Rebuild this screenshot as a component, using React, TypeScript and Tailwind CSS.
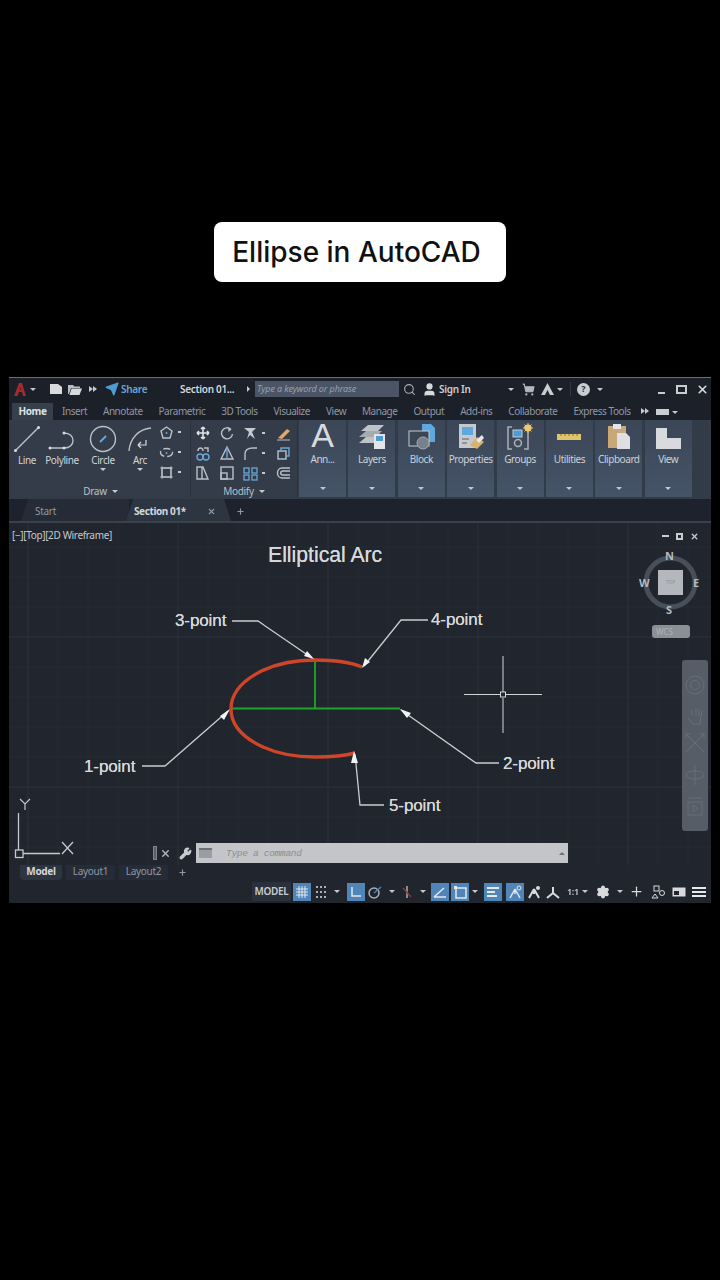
import { Send, Search, User, ShoppingCart, X, Plus, Wrench, Settings } from "lucide-react";

const font = "font-['Noto_Sans','Liberation_Sans',sans-serif]";

const Caret = ({ className = "ml-[3px]" }: { className?: string }) => (
  <span className={`inline-block h-0 w-0 shrink-0 border-x-[3px] border-t-[3px] border-x-transparent border-t-[#c4c9d0] ${className}`} />
);

// two little right pointing triangles, the ribbon's overflow mark
const Chevs = ({ className = "" }: { className?: string }) => (
  <span className={`flex w-[8px] shrink-0 ${className}`}>
    <span className="h-0 w-0 border-y-[3px] border-l-[4px] border-y-transparent border-l-[#c4c9d0]" />
    <span className="h-0 w-0 border-y-[3px] border-l-[4px] border-y-transparent border-l-[#c4c9d0]" />
  </span>
);

const tabs = ["Insert", "Annotate", "Parametric", "3D Tools", "Visualize", "View", "Manage", "Output", "Add-ins", "Collaborate", "Express Tools"];

const S = ({ w, h, children, className = "" }: { w: number; h: number; children: React.ReactNode; className?: string }) => (
  <svg width={w} height={h} viewBox={`0 0 ${w} ${h}`} fill="none" className={`shrink-0 ${className}`}>
    {children}
  </svg>
);

const TitleBar = () => (
  <div className="flex h-[22px] items-center border-t border-[#2f7fb8] bg-[#1c2029] pt-[1px] text-[10px] text-[#c9ced5]">
    <S w={12} h={14} className="ml-[5px]">
      <path d="M0 14 L5 1 H8 L12 14 H9 L8 10 H5 V7.500 H7 L6.500 5 L3.500 14 Z" fill="#a62a2d" />
    </S>
    <Caret className="ml-[4px]" />
    <S w={14} h={12} className="ml-[13px]">
      <path d="M1 1 H9 L13 4 V11 H1 Z" fill="#d8dadd" />
    </S>
    <S w={14} h={12} className="ml-[5px]">
      <path d="M0 2 H5 L6.500 3.500 H12 V5 H3 L1 11 H0 Z" fill="#b9bdc3" />
      <path d="M3.500 5.500 H14 L11.500 12 H1.500 Z" fill="#d8dadd" />
    </S>
    <Chevs className="ml-[7px]" />
    <Send size={14} className="ml-[8px] shrink-0" fill="#4f9bd4" stroke="#4f9bd4" />
    <span className="ml-[2px] w-[26px] shrink-0 font-semibold tracking-[-0.3px] text-[#6ba7d6]">Share</span>
    <span className="ml-[33px] w-[56px] shrink-0 whitespace-nowrap font-semibold tracking-[-0.3px] text-[#d3d7dc]">Section 01...</span>
    <span className="ml-[11px] h-0 w-0 shrink-0 border-y-[3px] border-l-[3px] border-y-transparent border-l-[#c4c9d0]" />
    <div className="ml-[5px] flex h-[16px] w-[144px] shrink-0 items-center bg-[#4b5566] pl-[2px] text-[9px] italic tracking-[-0.1px] text-[#98a0ad]">
      Type a keyword or phrase
    </div>
    <Search size={13} className="ml-[4px] shrink-0 text-[#a9aeb6]" />
    <User size={15} className="ml-[6px] shrink-0 text-[#d8dadd]" fill="#d8dadd" />
    <span className="ml-[2px] w-[30px] shrink-0 whitespace-nowrap font-semibold tracking-[-0.3px]">Sign In</span>
    <Caret className="ml-[39px]" />
    <ShoppingCart size={13} className="ml-[8px] shrink-0 text-[#b3b8bf]" fill="#b3b8bf" />
    <S w={15} h={14} className="ml-[5px]">
      <path d="M7.500 1 L14 13 H10 L7.500 8 L5 13 H1 Z" fill="#c9cdd2" />
    </S>
    <Caret className="ml-[2px]" />
    <span className="ml-[7px] h-[14px] w-px shrink-0 bg-[#333a45]" />
    <span className="ml-[6px] flex h-[13px] w-[13px] shrink-0 items-center justify-center rounded-full bg-[#c9cdd2] text-[9px] font-bold text-[#2a303a]">?</span>
    <Caret className="ml-[7px]" />
    <span className="ml-[55px] mt-[7px] h-[2px] w-[7px] shrink-0 bg-[#c9cdd2]" />
    <span className="ml-[11px] h-[9px] w-[11px] shrink-0 border-2 border-[#c9cdd2]" />
    <X size={13} strokeWidth={3} className="ml-[9px] shrink-0 text-[#d8dadd]" />
  </div>
);

const TabRow = () => (
  <div className="flex h-[21px] items-end bg-[#1c2029] text-[10px] tracking-[-0.45px] text-[#8f98a5]">
    <div className="ml-[3px] flex h-[17px] w-[41px] items-center justify-center bg-[#36404d] font-bold text-[#dfe2e6]">Home</div>
    <div className="ml-[9px] flex h-[17px] items-center gap-[15.900px] whitespace-nowrap">
      {tabs.map((t) => (
        <span key={t}>{t}</span>
      ))}
    </div>
    <Chevs className="mb-[6px] ml-[10px]" />
    <div className="mb-[5px] ml-[7px] h-[6px] w-[13px] bg-[#c9cdd2]" />
    <Caret className="mb-[6px] ml-[3px]" />
  </div>
);

const BigTool = ({ label, caret, width, children }: { label: string; caret?: boolean; width: string; children: React.ReactNode }) => (
  <div className={`flex ${width} shrink-0 flex-col items-center`}>
    <div className="flex h-[33px] items-end">{children}</div>
    <span className="mt-[1px] text-[10px] leading-[13px] tracking-[-0.4px] text-[#d0d4da]">{label}</span>
    {caret && <Caret className="ml-0 mt-[1px]" />}
  </div>
);

const Mini = ({ children, caret }: { children: React.ReactNode; caret?: boolean }) => (
  <div className="flex h-[20px] items-center">
    <S w={15} h={15}>{children}</S>
    {caret && <span className="ml-[4px] h-[2px] w-[3px] bg-[#c4c9d0]" />}
  </div>
);

const stroke = { stroke: "#b9c0c9", strokeWidth: 1.4 };

const DrawPanel = () => (
  <div className="flex w-[180px] shrink-0 flex-col border-r border-[#2a323d] bg-[#333c48]">
    <div className="flex h-[60px] items-start">
      <BigTool label="Line" width="w-[32px]">
        <S w={28} h={29}>
          <path d="M2 27 L26 3" {...stroke} />
          <circle cx="2.500" cy="26.500" r="1.500" fill="#d8dadd" />
          <circle cx="25.500" cy="3.500" r="1.500" fill="#d8dadd" />
        </S>
      </BigTool>
      <BigTool label="Polyline" width="w-[38px]">
        <S w={30} h={22}>
          <path d="M2 17 H17 C29 17 29 2 17 2" {...stroke} />
          <circle cx="3" cy="17" r="1.500" fill="#d8dadd" />
          <circle cx="17" cy="17" r="1.500" fill="#d8dadd" />
          <circle cx="17" cy="2" r="1.500" fill="#d8dadd" />
        </S>
      </BigTool>
      <BigTool label="Circle" caret width="w-[44px]">
        <S w={28} h={28}>
          <circle cx="14" cy="14" r="12.500" {...stroke} />
          <path d="M11 17 L17 11" stroke="#6ba7d6" strokeWidth="2" />
        </S>
      </BigTool>
      <BigTool label="Arc" caret width="w-[30px]">
        <S w={26} h={27}>
          <path d="M2 25 C3 12 12 3 24 2" {...stroke} />
          <path d="M11 19 H19 V14 M11 19 L14 16 M11 19 L14 22" stroke="#d8dadd" strokeWidth="1.200" />
        </S>
      </BigTool>
      <div className="ml-[4px] mt-[2px] flex flex-col">
        <Mini caret><path d="M7.500 2 L13 6 L11 13 H4 L2 6 Z" {...stroke} /><circle cx="7.500" cy="8" r="1" fill="#6ba7d6" /></Mini>
        <Mini caret><ellipse cx="7.500" cy="7.500" rx="6" ry="4" {...stroke} strokeDasharray="7 3" /><circle cx="7.500" cy="8" r="1" fill="#6ba7d6" /></Mini>
        <Mini caret><rect x="3" y="3" width="9" height="9" {...stroke} /><path d="M1 3 H14 M1 12 H14 M3 1 V14 M12 1 V14" stroke="#b9c0c9" strokeWidth="0.800" /></Mini>
      </div>
    </div>
    <div className="mt-[6px] flex h-[11px] items-center justify-center text-[10px] tracking-[-0.3px] text-[#b9c0c9]">
      Draw <Caret className="ml-[5px]" />
    </div>
  </div>
);

const ModifyPanel = () => (
  <div className="flex w-[107px] shrink-0 flex-col border-r border-[#2a323d] bg-[#333c48]">
    <div className="ml-[5px] mt-[3px] grid h-[60px] grid-cols-[24px_23px_33px_15px] grid-rows-[20px_20px_20px] items-center">
      <S w={14} h={14}><path d="M7 1 V13 M1 7 H13 M7 1 L5 3 M7 1 L9 3 M7 13 L5 11 M7 13 L9 11 M1 7 L3 5 M1 7 L3 9 M13 7 L11 5 M13 7 L11 9" stroke="#e0e3e6" strokeWidth="1.600" /></S>
      <S w={14} h={14}><path d="M11 3.500 A5.500 5.500 0 1 0 12.500 8" {...stroke} /><path d="M8 1 L11.500 3.500 L8.500 6" fill="#b9c0c9" /></S>
      <Mini caret><path d="M1 2 L13 2 L9 6 L12 13 L7 9 L4 13 L6 6 Z" fill="#c5cad0" /></Mini>
      <S w={15} h={15}><path d="M2 12 L11 3 L14 5 L6 13 Z" fill="#e0a868" /><path d="M1 14 H14" stroke="#b9c0c9" /></S>

      <S w={14} h={15}><circle cx="4" cy="11" r="3" stroke="#6ba7d6" strokeWidth="1.400" /><circle cx="10" cy="11" r="3" stroke="#6ba7d6" strokeWidth="1.400" /><path d="M2 5 C2 1 7 1 7 5 M8 2 H12 V6" {...stroke} /></S>
      <S w={14} h={14}><path d="M7 1 L13 13 H1 Z" {...stroke} /><path d="M7 1 V13" stroke="#6ba7d6" strokeWidth="1.400" /></S>
      <Mini caret><path d="M2 14 V8 C2 4 5 2 10 2 H14" {...stroke} /></Mini>
      <S w={15} h={15}><rect x="2" y="5" width="8" height="8" {...stroke} /><path d="M5 5 V2 H13 V10 H10" stroke="#6ba7d6" strokeWidth="1.400" /></S>

      <S w={14} h={15}><path d="M1 1 H7 L12 13 H1 Z M6 1 V13" {...stroke} /></S>
      <S w={14} h={14}><rect x="1" y="1" width="12" height="12" {...stroke} /><rect x="1" y="7" width="6" height="6" {...stroke} /></S>
      <Mini caret>
        <rect x="1" y="2" width="5" height="5" stroke="#6ba7d6" strokeWidth="1.300" />
        <rect x="9" y="2" width="5" height="5" stroke="#6ba7d6" strokeWidth="1.300" />
        <rect x="1" y="9" width="5" height="5" stroke="#6ba7d6" strokeWidth="1.300" />
        <rect x="9" y="9" width="5" height="5" stroke="#6ba7d6" strokeWidth="1.300" />
      </Mini>
      <S w={15} h={14}><path d="M14 2 H6 C0 2 0 12 6 12 H14 M14 5 H7 C4 5 4 9 7 9 H14" {...stroke} /></S>
    </div>
    <div className="mt-[3px] flex h-[11px] items-center justify-center text-[10px] tracking-[-0.3px] text-[#b9c0c9]">
      Modify <Caret className="ml-[5px]" />
    </div>
  </div>
);

const Panel = ({ label, children }: { label: string; children: React.ReactNode }) => (
  <div className="flex h-[77px] w-[47px] shrink-0 flex-col items-center bg-gradient-to-b from-[#3b4657] to-[#465468]">
    <div className="flex h-[30px] items-end">{children}</div>
    <span className="mt-[2px] whitespace-nowrap text-[10px] leading-[14px] tracking-[-0.45px] text-[#ccd1d8]">{label}</span>
    <Caret className="ml-0 mt-[21px]" />
  </div>
);

const Ribbon = () => (
  <div className="flex h-[79px] items-start bg-[#323b48] pl-[2px]">
    <DrawPanel />
    <ModifyPanel />
    <div className="ml-[1px] flex gap-[2.400px]">
      <Panel label="Ann...">
        <span className="font-['Liberation_Sans',sans-serif] text-[34px] leading-[30px] text-[#d8dadd]">A</span>
      </Panel>
      <Panel label="Layers">
        <S w={28} h={27}>
          <path d="M3 8 L10 2 H26 L20 8 Z" fill="#bfc3c8" />
          <path d="M1 14 L8 8 H24 L18 14 Z" fill="#a6abb2" />
          <path d="M1 20 L8 14 H24 L18 20 Z" fill="#bfc3c8" />
          <rect x="16" y="11" width="11" height="15" fill="#e3e5e8" />
          <rect x="18" y="13" width="7" height="5" fill="#4f9bd4" />
        </S>
      </Panel>
      <Panel label="Block">
        <S w={28} h={27} className="translate-x-[1px]">
          <path d="M14 1 H23 L27 5 V19 H14 Z" fill="#5fa8de" />
          <rect x="1" y="8" width="20" height="15" fill="#3b4657" stroke="#c5cad0" />
          <circle cx="15" cy="20" r="6" fill="#77808c" stroke="#a6abb2" />
        </S>
      </Panel>
      <Panel label="Properties">
        <S w={28} h={27}>
          <rect x="2" y="1" width="17" height="24" fill="#c5c8cc" />
          <rect x="5" y="4" width="11" height="8" fill="#5fa8de" />
          <path d="M5 16 H12 M5 20 H10" stroke="#59616d" />
          <path d="M13 22 L20 14 L27 19 L20 26 Z" fill="#d9b26f" />
          <path d="M19 17 L25 12 L27 15 L22 20 Z" fill="#e6e7e9" />
        </S>
      </Panel>
      <Panel label="Groups">
        <S w={28} h={27}>
          <path d="M6 4 H2 V26 H6 M18 4 H22 V26 H18" stroke="#aab0b8" strokeWidth="1.500" />
          <rect x="7" y="7" width="9" height="7" fill="#4f9bd4" stroke="#c5cad0" />
          <circle cx="12" cy="20" r="3.500" stroke="#aab0b8" strokeWidth="1.500" />
          <circle cx="22" cy="5" r="3.500" fill="#eec76e" />
          <path d="M22 0 V10 M17 5 H27 M18.500 1.500 L25.500 8.500 M25.500 1.500 L18.500 8.500" stroke="#eec76e" />
        </S>
      </Panel>
      <Panel label="Utilities">
        <S w={26} h={12} className="mb-[7px]">
          <rect x="1" y="3" width="24" height="6" fill="#e0c36c" />
          <path d="M5 3 V5 M9 3 V5 M13 3 V5 M17 3 V5 M21 3 V5" stroke="#8a7434" />
        </S>
      </Panel>
      <Panel label="Clipboard">
        <S w={24} h={27}>
          <rect x="1" y="3" width="18" height="22" fill="#c9a877" />
          <rect x="6" y="1" width="8" height="5" fill="#e3e5e8" />
          <path d="M10 10 H19 L23 14 V26 H10 Z" fill="#dedfe2" />
        </S>
      </Panel>
      <Panel label="View">
        <S w={27} h={22} className="mb-[1px]">
          <path d="M1 1 H12 V11 H26 V22 H1 Z" fill="#d9dadd" />
        </S>
      </Panel>
    </div>
  </div>
);

const DocTabs = () => (
  <div className="flex h-[24px] items-stretch border-b-2 border-[#39414d] bg-[#1d222c] text-[10px] tracking-[-0.3px]">
    <div className="ml-[12px] flex w-[108px] items-center bg-[#262c37] pl-[14px] pt-[3px] text-[#8f98a5] [clip-path:polygon(7px_0,100%_0,100%_100%,0_100%)]">Start</div>
    <div className="-ml-[3px] flex w-[105px] items-center bg-[#2d3541] pl-[8px] pt-[3px] font-bold tracking-[-0.4px] text-[#d3d7dc] [clip-path:polygon(7px_0,calc(100%-7px)_0,100%_100%,0_100%)]">
      Section 01*
      <X size={9} strokeWidth={3} className="ml-[21px] text-[#8f98a5]" />
    </div>
    <Plus size={9} strokeWidth={3} className="ml-[5px] mt-[3px] self-center text-[#8f98a5]" />
  </div>
);

const gridMinorV = [58, 88, 118, 148, 208, 238, 268, 298, 358, 388, 418, 448, 508, 538, 568, 598, 658, 688];
const gridMinorH = [547, 577, 607, 667, 697, 727, 757, 817, 847];

const Drawing = () => (
  <svg width="702" height="342" viewBox="9 523 702 342" fill="none" className="block">
    {gridMinorV.map((x) => (
      <path key={x} d={`M${x} 523 V865`} stroke="#252a33" />
    ))}
    {gridMinorH.map((y) => (
      <path key={y} d={`M9 ${y} H711`} stroke="#252a33" />
    ))}
    {[28, 178, 328, 478, 628].map((x) => (
      <path key={x} d={`M${x} 523 V865`} stroke="#2c323c" />
    ))}
    {[637, 787].map((y) => (
      <path key={y} d={`M9 ${y} H711`} stroke="#2c323c" />
    ))}
    {/* green axes */}
    <path d="M231 708.500 H400 M315 660 V708" stroke="#1fa52f" strokeWidth="1.800" />
    {/* elliptical arc */}
    <path d="M362 667 C350 662 333 660 315 660 C268 660 231 682 231 709 C231 736 268 757 315 757 C331 757 344 756 355 753" stroke="#d0452a" strokeWidth="3.400" />
    {/* leaders */}
    <g stroke="#c9ccd0" strokeWidth="1.300">
      <path d="M232 621 H258 L312 658" />
      <path d="M428 620 H401 L364 666" />
      <path d="M142 766 H165 L228 711" />
      <path d="M401 710 L476 763 H499" />
      <path d="M355 754 L360 805 H384" />
    </g>
    <g fill="#f1f2f3">
      <path d="M314 659 L304 656 L307 651 Z" />
      <path d="M362 668 L365 658 L370 662 Z" />
      <path d="M230 709 L220 716 L224 720 Z" />
      <path d="M400 709 L411 713 L407 718 Z" />
      <path d="M354 751 L351 763 L358 763 Z" />
    </g>
    {/* crosshair */}
    <path d="M464 694.500 H500 M506 694.500 H542 M503 656 V692 M503 698 V733" stroke="#d3d5d8" />
    <rect x="500.500" y="692" width="5" height="5" stroke="#d3d5d8" />
    {/* ucs icon */}
    <path d="M18.500 813 V850 M23 853.500 H60" stroke="#c5c8cc" strokeWidth="1.300" />
    <rect x="15.500" y="850" width="7.500" height="7.500" stroke="#c5c8cc" strokeWidth="1.300" />
    <path d="M20 799 L25 804 L30 799 M25 804 V810" stroke="#c5c8cc" strokeWidth="1.200" />
    <path d="M62 842 L73 854 M73 842 L62 854" stroke="#c5c8cc" strokeWidth="1.300" />
    {/* view cube ring */}
    <circle cx="670.500" cy="582.500" r="24.500" stroke="#484f59" strokeWidth="5" />
  </svg>
);

const label = "absolute whitespace-nowrap font-['Liberation_Sans',sans-serif] text-[17px] leading-[20px] tracking-[-0.1px] text-[#d6d8da] [text-shadow:0_0_0.6px_#d6d8da]";
const compass = "absolute text-[11px] font-bold leading-[11px] text-[#b5b9bf]";

const Canvas = () => (
  <div className="relative h-[342px] overflow-hidden bg-[#21262e]">
    <Drawing />
    <span className="absolute left-[3px] top-[6px] whitespace-nowrap text-[10px] leading-[12px] tracking-[-0.35px] text-[#c5c9cf]">[−][Top][2D Wireframe]</span>
    <span className="absolute left-[259px] top-[19px] whitespace-nowrap font-['Liberation_Sans',sans-serif] text-[21.200px] leading-[26px] text-[#d6d8da] [text-shadow:0_0_0.5px_#d6d8da]">Elliptical Arc</span>
    <span className={`${label} left-[166px] top-[88px]`}>3-point</span>
    <span className={`${label} left-[422px] top-[87px]`}>4-point</span>
    <span className={`${label} left-[75px] top-[234px]`}>1-point</span>
    <span className={`${label} left-[494px] top-[231px]`}>2-point</span>
    <span className={`${label} left-[380px] top-[273px]`}>5-point</span>

    {/* viewport controls */}
    <div className="absolute left-[653px] top-[9px] flex h-[8px] items-center gap-[7px]">
      <span className="h-[2px] w-[7px] bg-[#c9cdd2]" />
      <span className="h-[7px] w-[7px] border-2 border-[#c9cdd2]" />
      <X size={9} strokeWidth={3.500} className="text-[#c9cdd2]" />
    </div>
    {/* view cube */}
    <div className="absolute left-[649px] top-[47px] flex h-[25px] w-[25px] items-center justify-center bg-[#b4b8bd] text-[5px] text-[#8b9097]">TOP</div>
    <span className={`${compass} left-[656px] top-[27px]`}>N</span>
    <span className={`${compass} left-[657px] top-[81px]`}>S</span>
    <span className={`${compass} left-[630px] top-[54px]`}>W</span>
    <span className={`${compass} left-[684px] top-[54px]`}>E</span>
    <div className="absolute left-[643px] top-[102px] flex h-[13px] w-[38px] items-center rounded-[3px] bg-[#8b9097] pl-[4px] text-[8px] text-[#aeb2b8]">WCS</div>
    {/* nav bar */}
    <div className="absolute left-[673px] top-[137px] flex h-[171px] w-[26px] flex-col items-center rounded-[3px] bg-[#565d66] pt-[15px]">
      <S w={20} h={20}><circle cx="10" cy="10" r="9" stroke="#686f78" /><circle cx="10" cy="10" r="4.500" stroke="#686f78" /></S>
      <S w={20} h={24} className="mt-[11px]"><path d="M3 12 L8 18 H15 L17 4 M7 10 V4 M11 10 V2 M14 10 V3" stroke="#686f78" /></S>
      <S w={22} h={22} className="mt-[2px]"><path d="M2 2 L20 20 M20 2 L2 20 M2 2 H6 M2 2 V6 M20 2 H16 M20 2 V6" stroke="#686f78" /></S>
      <S w={20} h={20} className="mt-[11px]"><ellipse cx="10" cy="10" rx="9" ry="4" stroke="#686f78" /><path d="M10 0 V20" stroke="#686f78" /></S>
      <S w={16} h={20} className="mt-[11px]"><rect x="1" y="6" width="14" height="13" stroke="#686f78" /><path d="M1 2 H15 M6 9 L11 12.500 L6 16 Z" stroke="#686f78" /></S>
    </div>
    {/* command line */}
    <div className="absolute left-[144px] top-[320px] flex h-[20px] items-center">
      <span className="h-[14px] w-[4px] border border-[#7e858e] bg-[#596069]" />
      <X size={11} strokeWidth={3} className="ml-[3px] text-[#b5b9bf]" />
      <Wrench size={13} className="ml-[8px] text-[#c9cdd2]" fill="#c9cdd2" />
      <div className="ml-[4px] flex h-[20px] w-[372px] items-center bg-[#c3c5c8] pl-[3px] pr-[3px]">
        <span className="flex h-[10px] w-[13px] items-center border-t-2 border-[#6d7177] bg-[#9a9da2]" />
        <Caret className="ml-[1px] border-t-[#6d7177]" />
        <span className="ml-[7px] mt-[3px] font-['Liberation_Mono',monospace] text-[9.500px] italic tracking-[-0.3px] text-[#8a8d92]">Type a command</span>
        <span className="ml-auto h-0 w-0 border-x-[3px] border-b-[3px] border-x-transparent border-b-[#6d7177]" />
      </div>
    </div>
  </div>
);

const Active = ({ children }: { children: React.ReactNode }) => (
  <span className="flex h-[18px] w-[18px] shrink-0 items-center justify-center bg-[#4f85b8]">
    <S w={14} h={14}>{children}</S>
  </span>
);

const Plain = ({ children, className = "" }: { children: React.ReactNode; className?: string }) => (
  <S w={14} h={14} className={className}>{children}</S>
);

const w = { stroke: "#e6e8ea", strokeWidth: 1.500 };
const g = { stroke: "#aab0b8", strokeWidth: 1.500 };

const BottomBars = () => (
  <div className="flex flex-1 flex-col bg-[#20252e]">
    <div className="flex h-[15px] items-center pl-[11px] text-[10px] tracking-[-0.3px] text-[#8f98a5]">
      <span className="flex h-[15px] w-[42px] items-center justify-center rounded-b-[4px] bg-[#2d3541] pb-[2px] font-bold text-[#d3d7dc]">Model</span>
      <span className="ml-[4px] flex h-[15px] w-[49px] items-center justify-center bg-[#262c37] pb-[2px]">Layout1</span>
      <span className="ml-[4px] flex h-[15px] w-[49px] items-center justify-center bg-[#262c37] pb-[2px]">Layout2</span>
      <Plus size={9} strokeWidth={3} className="ml-[10px]" />
    </div>
    <div className="flex h-[23px] items-center pl-[243px] text-[10px] text-[#c9cdd2]">
      <span className="flex h-[19px] w-[39px] items-center justify-center bg-[#2b313b] font-semibold tracking-[-0.3px]">MODEL</span>
      <span className="ml-[2px]" />
      <Active><path d="M1 4 H13 M1 7 H13 M1 10 H13 M4 1 V13 M7 1 V13 M10 1 V13" stroke="#e6e8ea" /></Active>
      <Plain className="ml-[3px]"><path d="M2 2 H12 M2 7 H12 M2 12 H12" stroke="#aab0b8" strokeWidth="2" strokeDasharray="2 2" /></Plain>
      <Caret className="ml-[6px]" />
      <span className="ml-[7px]" />
      <Active><path d="M3 2 V11 H12" {...w} /></Active>
      <Plain className="ml-[3px]"><circle cx="6" cy="8" r="5" {...g} /><path d="M6 8 L13 2" stroke="#4f85b8" strokeWidth="1.500" /></Plain>
      <Caret className="ml-[7px]" />
      <Plain className="ml-[5px]"><path d="M7 1 V13" {...g} /><path d="M3 3 L11 12" stroke="#8a3a34" strokeWidth="1.500" /></Plain>
      <Caret className="ml-[6px]" />
      <span className="ml-[5px]" />
      <Active><path d="M1 12 H13 M1 12 L11 3" {...w} /></Active>
      <span className="ml-[2px]" />
      <Active><rect x="3" y="3" width="10" height="10" {...w} /><rect x="1" y="1" width="3" height="3" fill="#e6e8ea" /></Active>
      <Caret className="ml-[3px]" />
      <span className="ml-[6px]" />
      <Active><path d="M1 3 H13 M1 7 H9 M1 11 H11" stroke="#e6e8ea" strokeWidth="2" /></Active>
      <span className="ml-[4px]" />
      <Active><path d="M7 4 L2 13 M7 4 L12 13 M7 4 V9" {...w} /><circle cx="11" cy="3" r="2" stroke="#e6e8ea" /></Active>
      <Plain className="ml-[3px]"><path d="M7 4 L2 13 M7 4 L12 13 M7 4 V9" stroke="#d8dadd" strokeWidth="2" /><circle cx="11" cy="3" r="2" fill="#d8dadd" /></Plain>
      <Plain className="ml-[5px]"><path d="M7 2 V8 L1 13 M7 8 L13 13" stroke="#d8dadd" strokeWidth="2" /></Plain>
      <span className="ml-[7px] w-[12px] text-[9px] font-semibold tracking-[-0.3px]">1:1</span>
      <Caret className="ml-[3px]" />
      <Settings size={14} className="ml-[8px] shrink-0 text-[#d8dadd]" fill="#d8dadd" strokeWidth={2} />
      <Caret className="ml-[7px]" />
      <Plus size={15} strokeWidth={2} className="ml-[6px] shrink-0 text-[#d8dadd]" />
      <Plain className="ml-[7px]"><rect x="3" y="1" width="5" height="5" stroke="#d8dadd" /><circle cx="11" cy="8" r="2.500" stroke="#d8dadd" /><path d="M4 9 L7 13 H1 Z" stroke="#d8dadd" /></Plain>
      <Plain className="ml-[7px]"><rect x="0.500" y="2.500" width="13" height="9" fill="#d8dadd" /><rect x="2" y="6" width="5" height="4" fill="#20252e" /></Plain>
      <Plain className="ml-[6px]"><path d="M0 3 H14 M0 7 H14 M0 11 H14" stroke="#e6e8ea" strokeWidth="1.800" /></Plain>
    </div>
  </div>
);

export default function App() {
  return (
    <div className={`flex h-[1280px] w-[720px] flex-col bg-black ${font}`}>
      <div className="ml-[214px] mt-[222px] flex h-[60px] w-[292px] items-center justify-center rounded-[8px] bg-white pr-[7px] font-['Inter',sans-serif] text-[28px] font-medium text-[#111]">
        Ellipse in AutoCAD
      </div>
      <div className="ml-[9px] mt-[95px] flex h-[526px] w-[702px] flex-col overflow-hidden blur-[0.4px]">
        <TitleBar />
        <TabRow />
        <Ribbon />
        <DocTabs />
        <Canvas />
        <BottomBars />
      </div>
    </div>
  );
}
